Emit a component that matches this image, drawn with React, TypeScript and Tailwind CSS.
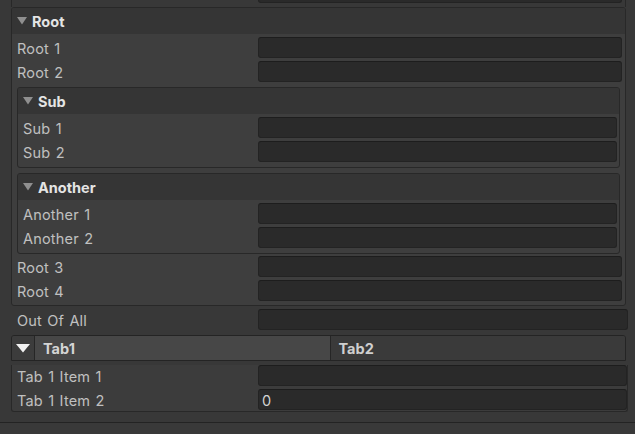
import React from "react"

// Dark inspector panel: nested foldout groups, a tab bar and text fields

const Tri = ({ color }: { color: string }) => (
  <svg width="10" height="8" viewBox="0 0 10 8" className="shrink-0">
    <polygon points="0,0 10,0 5,7.5" fill={color} />
  </svg>
)

const Field = ({ value }: { value?: string }) => (
  <div className="flex-1 h-[21px] rounded-[3px] bg-[#2a2a2a] border border-[#232323] border-t-[#1d1d1d] px-[3px] pt-[1px] text-[14.5px] leading-[19px] text-[#d2d2d2]">
    {value}
  </div>
)

interface RowProps {
  label: string
  labelCls: string
  cls: string
  value?: string
}

const Row = ({ label, labelCls, cls, value }: RowProps) => (
  <div className={`flex items-center h-[21px] ${cls}`}>
    <span className={`shrink-0 pt-[4px] text-[14.5px] tracking-[0.2px] [word-spacing:1px] text-[#c0c0c0] leading-none ${labelCls}`}>
      {label}
    </span>
    <Field value={value} />
  </div>
)

const Header = ({ title }: { title: string }) => (
  <div className="flex items-center gap-[5px] h-[26px] pl-[5px] bg-[#353535]">
    <Tri color="#8f8f8f" />
    <span className="pt-[2px] text-[14.5px] font-bold text-[#e4e4e4] leading-none">{title}</span>
  </div>
)

const SubGroup = ({ title, items, cls }: { title: string; items: string[]; cls: string }) => (
  <div className={`mx-[5px] rounded-[3px] border border-[#282828] bg-[#3e3e3e] overflow-hidden pb-[5px] ${cls}`}>
    <Header title={title} />
    {items.map((it) => (
      <Row key={it} label={it} labelCls="w-[235px]" cls="mt-[3px] pl-[5px] pr-[2px]" />
    ))}
  </div>
)

export default function App() {
  return (
    <div
      className="w-[635px] h-[434px] bg-[#383838] overflow-hidden"
      style={{ fontFamily: "Inter, 'Noto Sans', sans-serif" }}
    >
      <div className="pl-[11px]">
        {/* tail of the previous block */}
        <div className="w-[615px] h-[7px] border-x border-[#282828]">
          <div className="ml-[246px] w-[364px] h-[3px] bg-[#2a2a2a] border-x border-b border-[#232323] rounded-b-[3px]" />
        </div>

        {/* Root */}
        <div className="w-[615px] rounded-[3px] border border-[#282828] bg-[#3e3e3e] overflow-hidden pb-[4px]">
          <Header title="Root" />
          <Row label="Root 1" labelCls="w-[241px]" cls="mt-[3px] pl-[5px] pr-[3px]" />
          <Row label="Root 2" labelCls="w-[241px]" cls="mt-[3px] pl-[5px] pr-[3px]" />
          <SubGroup title="Sub" items={["Sub 1", "Sub 2"]} cls="mt-[5px]" />
          <SubGroup title="Another" items={["Another 1", "Another 2"]} cls="mt-[5px]" />
          <Row label="Root 3" labelCls="w-[241px]" cls="mt-[2px] pl-[5px] pr-[3px]" />
          <Row label="Root 4" labelCls="w-[241px]" cls="mt-[3px] pl-[5px] pr-[3px]" />
        </div>

        <Row label="Out Of All" labelCls="w-[241px]" cls="mt-[3px] pl-[6px] pr-[7px]" />

        {/* Tabs */}
        <div className="mt-[5px] w-[615px] h-[26px] flex rounded-t-[3px] border border-[#242424] overflow-hidden">
          <div className="w-[23px] shrink-0 flex items-center justify-center bg-[#3c3c3c] border-r border-[#262626]">
            <svg width="14" height="9" viewBox="0 0 14 9">
              <polygon points="0,0 14,0 7,8.5" fill="#f2f2f2" />
            </svg>
          </div>
          <div className="flex-1 flex items-center pl-[8px] bg-[#474747] border-r border-[#262626]">
            <span className="pt-[2px] text-[14.5px] font-bold text-[#d4d4d4] leading-none">Tab1</span>
          </div>
          <div className="flex-1 flex items-center pl-[8px] bg-[#3a3a3a]">
            <span className="pt-[2px] text-[14.5px] font-bold text-[#cfcfcf] leading-none">Tab2</span>
          </div>
        </div>
        <div className="w-[617px] border-x border-b border-[#282828] rounded-b-[3px] bg-[#3c3c3c] pb-[1px]">
          <Row label="Tab 1 Item 1" labelCls="w-[241px]" cls="mt-[4px] pl-[5px]" />
          <Row label="Tab 1 Item 2" labelCls="w-[241px]" cls="mt-[3px] pl-[5px]" value="0" />
        </div>
      </div>

      <div className="mt-[10px] h-[40px] border-t border-[#232323] bg-[#393939]" />
    </div>
  )
}
